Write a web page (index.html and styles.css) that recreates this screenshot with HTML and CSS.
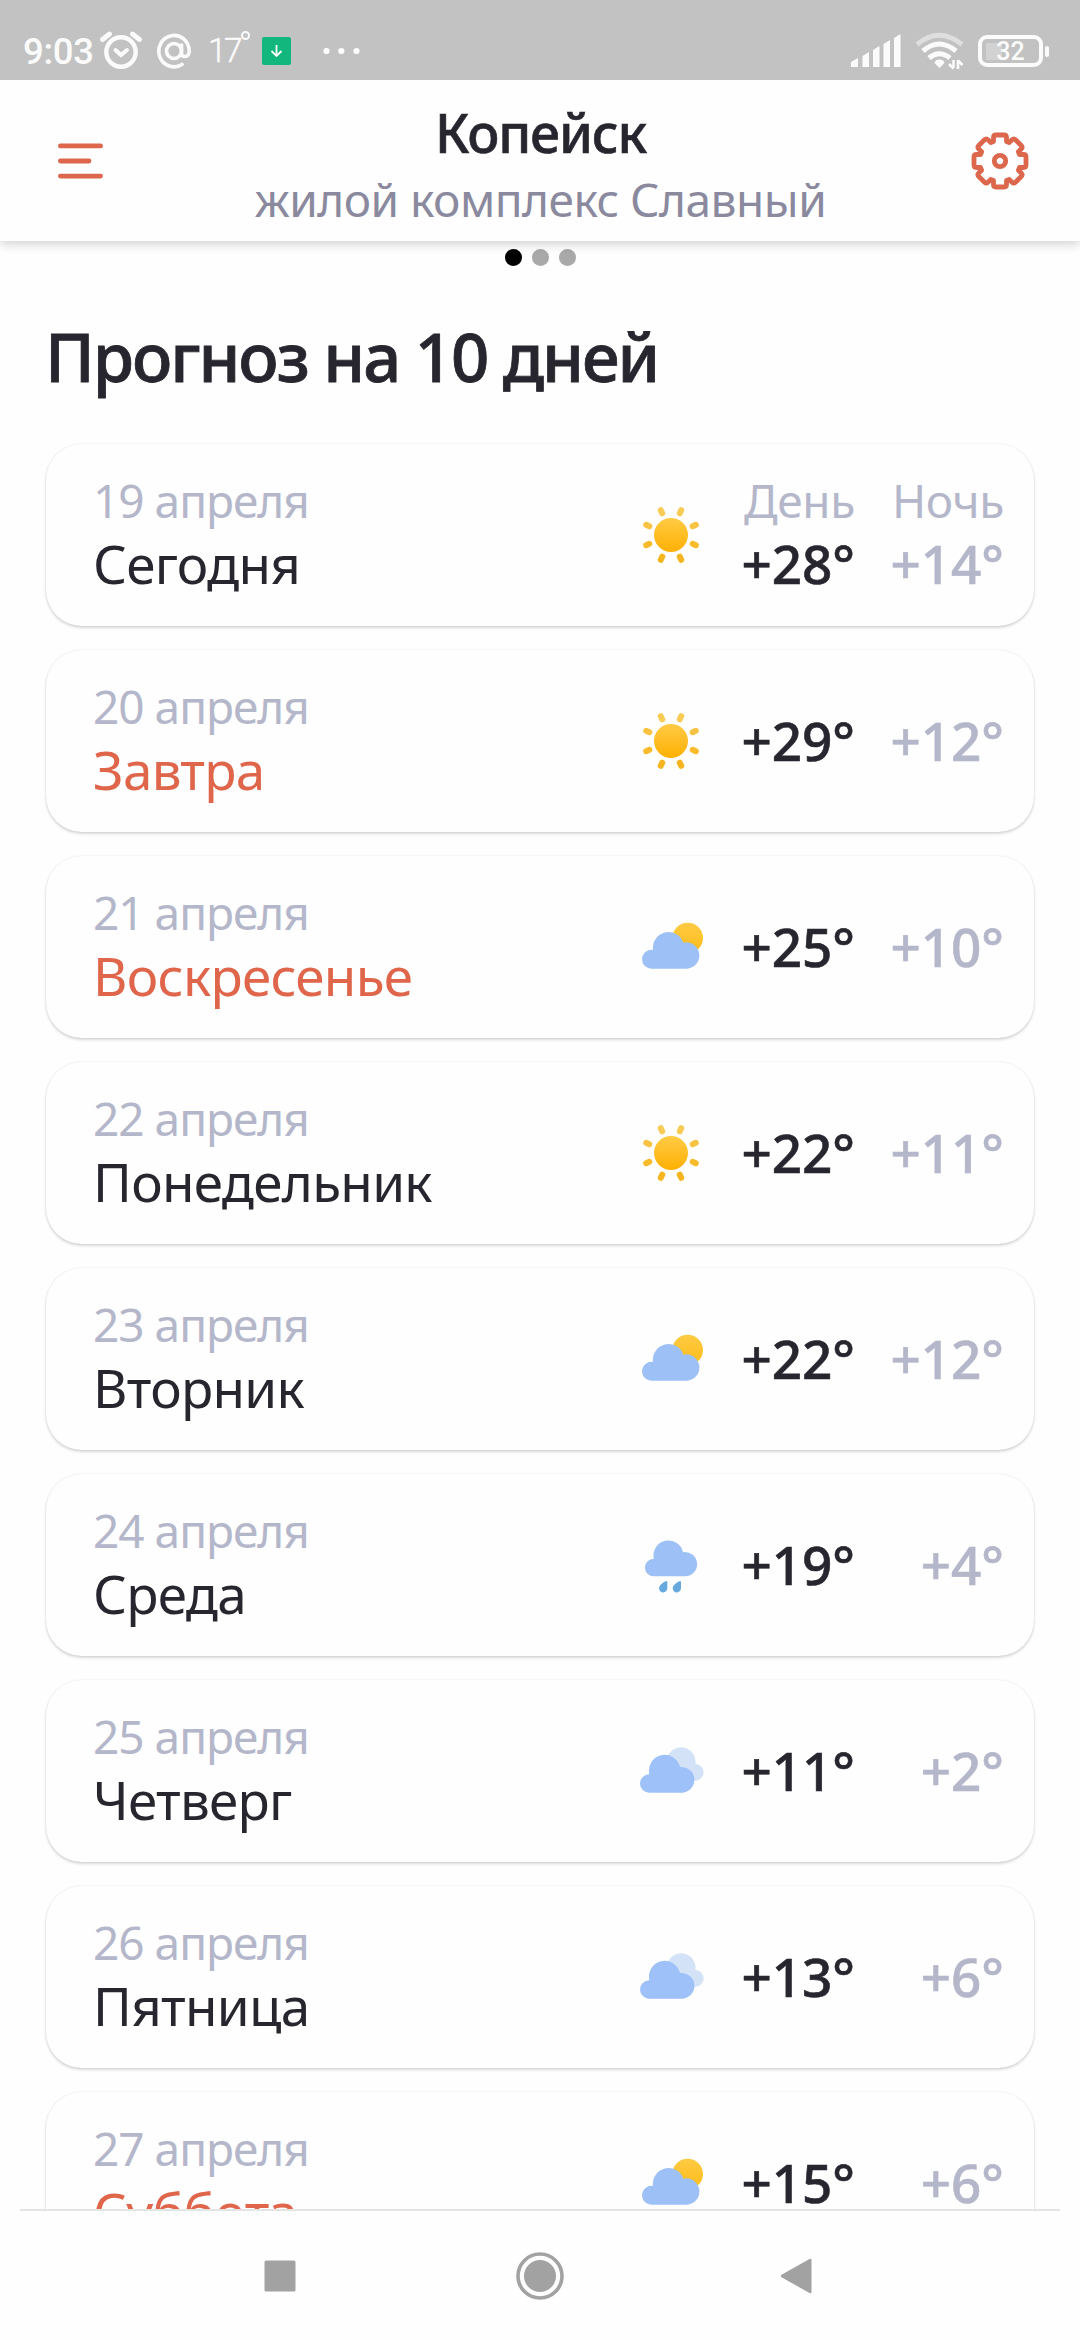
FILE: index.html
```html
<!DOCTYPE html>
<html lang="ru">
<head>
<meta charset="utf-8">
<title>Прогноз на 10 дней</title>
<link rel="stylesheet" href="styles.css">
</head>
<body>
<svg class="defs" width="0" height="0">
  <defs>
    <linearGradient id="gs" gradientUnits="userSpaceOnUse" x1="0" y1="-17" x2="0" y2="17"><stop offset="0" stop-color="#ffcb45"/><stop offset="1" stop-color="#feb003"/></linearGradient>
    <linearGradient id="gs2" x1="0" y1="0" x2="0" y2="1"><stop offset="0" stop-color="#fecb44"/><stop offset="1" stop-color="#febb19"/></linearGradient>
  </defs>
  <symbol id="sun" viewBox="-35 -35 70 70">
    <circle r="17" fill="url(#gs)"/>
    <g stroke-width="6" stroke-linecap="round">
      <path stroke="#f8cb55" d="M8.800-21.700L10.200-24.800M-8.800-21.700L-10.200-24.800"/>
      <path stroke="#f8c343" d="M21.700-8.800L24.800-10.200M-21.700-8.800L-24.800-10.200"/>
      <path stroke="#f8bb2a" d="M21.700 8.800L24.800 10.200M-21.700 8.800L-24.800 10.200"/>
      <path stroke="#f6b51e" d="M8.800 21.700L10.200 24.800M-8.800 21.700L-10.200 24.800"/>
    </g>
  </symbol>
  <symbol id="partly" viewBox="45 156 210 210">
    <circle cx="200" cy="234" r="46" fill="url(#gs2)"/>
    <path fill="#9dc1f6" d="M95 326A28.500 28.500 0 1 1 96 269.500A47 47 0 0 1 187 248A39.500 39.500 0 1 1 197 326Z"/>
  </symbol>
  <symbol id="rain" viewBox="45 150 210 210">
    <path fill="#9dc1f6" d="M98 289A26.500 26.500 0 1 1 98.500 236A44 44 0 0 1 186 216.500A36.500 36.500 0 1 1 193 289Z"/>
    <path fill="#67a9de" d="M136 303Q139 303 139 307V324A12.500 12.500 0 1 1 115 320Q119 311 136 303ZM177 303Q180 303 180 307V324A12.500 12.500 0 1 1 156 320Q160 311 177 303Z"/>
  </symbol>
  <symbol id="cloudy" viewBox="45 768 210 210">
    <path fill="#d3e2f6" d="M138 839A43 43 0 1 1 223 852A25 25 0 1 1 223 902L170 900Z"/>
    <path fill="#9dc1f8" d="M84 938A27.500 27.500 0 1 1 85 883A47 47 0 0 1 177 861A38.500 38.500 0 1 1 186 938Z"/>
  </symbol>
</svg>

<header class="status">
  <span class="time">9:03</span>
  <svg class="alarm" width="42" height="40" viewBox="0 0 42 40" fill="none" stroke="#fbfbfb" stroke-width="4.400" stroke-linecap="round"><circle cx="21" cy="21" r="14.700"/><path d="M2.500 8.500L9.500 3M39.500 8.500L32.500 3" stroke-width="4.800"/><path d="M15.500 19L21 24L27 19" stroke-width="4"/></svg>
  <svg class="at" width="36" height="36" viewBox="0 0 36 36" fill="none" stroke="#fbfbfb" stroke-width="3.600" stroke-linecap="round"><circle cx="18" cy="18" r="7.500"/><path d="M25.500 12V20.500Q25.500 23.500 29 23.500Q33 23.500 33.200 18A15.200 15.700 0 1 0 26 31.500"/></svg>
  <span class="outside">17<i></i></span>
  <svg class="dl" width="29" height="28" viewBox="0 0 29 28"><rect width="29" height="28" rx="2" fill="#11b77c"/><path d="M14.500 8V19M9.500 14L14.500 19L19.500 14" fill="none" stroke="#fff" stroke-width="1.800"/></svg>
  <svg class="more" width="37" height="8" viewBox="0 0 37 8" fill="#fff"><circle cx="3.500" cy="4" r="3.100"/><circle cx="18.300" cy="4" r="3.100"/><circle cx="33.500" cy="4" r="3.100"/></svg>
  <span class="grow"></span>
  <svg class="signal" width="50" height="34" viewBox="0 0 50 34" fill="#fbfbfb"><path d="M0 28L7 24V33H0ZM11.500 22L18 18V33H11.500ZM22 16L28.500 12V33H22ZM32.500 10L39 6V33H32.500ZM43 4L49.500 0V33H43Z"/></svg>
  <svg class="wifi" width="50" height="38" viewBox="0 0 50 38" fill="none" stroke="#fbfbfb" stroke-width="5"><path stroke="#dedede" d="M2 12.500Q24 -6 47 12.500"/><path d="M8 19Q24 5 41 19M14 26Q24 17.500 35 26"/><path d="M24.500 27.500Q29 27.500 29.500 31L24.500 36L19.500 31Q20 27.500 24.500 27.500Z" fill="#fbfbfb" stroke="none"/><path d="M38.500 28V36M34 32L38.500 36.500M43 37V28M43 28.500L47.500 33" stroke-width="2.600"/></svg>
  <span class="battery">32</span>
</header>

<div class="appbar">
  <svg width="45" height="36" viewBox="0 0 45 36" stroke="#dd674c" stroke-width="4.800" stroke-linecap="round"><path d="M2.400 2.900H42.600M2.400 18H31M2.400 33.100H42.600"/></svg>
  <div class="place"><h1>Копейск</h1><p>жилой комплекс Славный</p></div>
  <svg width="58" height="58" viewBox="-29 -29 58 58" fill="none" stroke="#dd674c" stroke-width="4.800" stroke-linejoin="round"><circle r="5.700"/><path d="M-6.500-19.500V-23.500Q-6.500-26-4-26H4Q6.500-26 6.500-23.500V-19.500L9.200-18.400L12-21.200Q13.700-22.900 15.500-21.200L21.200-15.500Q22.900-13.700 21.200-12L18.400-9.200L19.500-6.500H23.500Q26-6.500 26-4V4Q26 6.500 23.500 6.500H19.500L18.400 9.200L21.200 12Q22.900 13.700 21.200 15.500L15.500 21.200Q13.700 22.900 12 21.200L9.200 18.400L6.500 19.500V23.500Q6.500 26 4 26H-4Q-6.500 26-6.500 23.500V19.500L-9.200 18.400L-12 21.200Q-13.700 22.900-15.500 21.200L-21.200 15.500Q-22.900 13.700-21.200 12L-18.400 9.200L-19.500 6.500H-23.500Q-26 6.500-26 4V-4Q-26-6.500-23.500-6.500H-19.500L-18.400-9.200L-21.200-12Q-22.900-13.700-21.200-15.500L-15.500-21.200Q-13.700-22.900-12-21.200L-9.200-18.400Z"/></svg>
</div>

<main class="content">
  <div class="dots"><i class="on"></i><i></i><i></i></div>
  <h2>Прогноз на 10 дней</h2>
  <div class="list">
    <section class="card"><div class="when"><p>19 апреля</p><b>Сегодня</b></div><svg class="ico"><use href="#sun"/></svg><div class="t day head"><p>День</p>+28°</div><div class="t night head"><p>Ночь</p>+14°</div></section>
    <section class="card"><div class="when"><p>20 апреля</p><b class="red">Завтра</b></div><svg class="ico"><use href="#sun"/></svg><div class="t day">+29°</div><div class="t night">+12°</div></section>
    <section class="card"><div class="when"><p>21 апреля</p><b class="red">Воскресенье</b></div><svg class="ico"><use href="#partly"/></svg><div class="t day">+25°</div><div class="t night">+10°</div></section>
    <section class="card"><div class="when"><p>22 апреля</p><b>Понедельник</b></div><svg class="ico"><use href="#sun"/></svg><div class="t day">+22°</div><div class="t night">+11°</div></section>
    <section class="card"><div class="when"><p>23 апреля</p><b>Вторник</b></div><svg class="ico"><use href="#partly"/></svg><div class="t day">+22°</div><div class="t night">+12°</div></section>
    <section class="card"><div class="when"><p>24 апреля</p><b>Среда</b></div><svg class="ico"><use href="#rain"/></svg><div class="t day">+19°</div><div class="t night">+4°</div></section>
    <section class="card"><div class="when"><p>25 апреля</p><b>Четверг</b></div><svg class="ico"><use href="#cloudy"/></svg><div class="t day">+11°</div><div class="t night">+2°</div></section>
    <section class="card"><div class="when"><p>26 апреля</p><b>Пятница</b></div><svg class="ico"><use href="#cloudy"/></svg><div class="t day">+13°</div><div class="t night">+6°</div></section>
    <section class="card"><div class="when"><p>27 апреля</p><b class="red">Суббота</b></div><svg class="ico"><use href="#partly"/></svg><div class="t day">+15°</div><div class="t night">+6°</div></section>
  </div>
</main>

<nav class="sysnav">
  <svg width="50" height="50" viewBox="-25 -25 50 50" fill="#a2a2a2"><rect x="-15.500" y="-15.500" width="31" height="31" rx="1.500"/></svg>
  <svg width="50" height="50" viewBox="-25 -25 50 50" fill="#a2a2a2"><circle r="22" fill="none" stroke="#a2a2a2" stroke-width="3.600"/><circle r="16"/></svg>
  <svg width="50" height="50" viewBox="-21 -25 50 50" fill="#a2a2a2"><path d="M-14.500-1.200L13.500-17Q15.500-18 15.500-16V16Q15.500 18 13.500 17L-14.500 1.200Q-16 0-14.500-1.200Z"/></svg>
</nav>
</body>
</html>
```

FILE: styles.css
```css
* { box-sizing: border-box; margin: 0; padding: 0; }
body {
  width: 1080px; height: 2340px; overflow: hidden;
  display: flex; flex-direction: column;
  background: #fefefe; color: #27262f;
  font-family: "Noto Sans", "Open Sans", sans-serif;
}
svg { display: block; flex: none; }
.defs { width: 0; height: 0; }

.status {
  height: 80px; flex: none; padding: 21px 31px 0 23px;
  display: flex; align-items: center; position: relative; z-index: 2;
  background: #c2c2c2; color: #fbfbfb;
  font-family: Roboto, sans-serif;
}
.time { width: 77px; font-size: 36.500px; font-weight: 500; line-height: 40px; padding-top: 2px; letter-spacing: -.3px; }
.alarm { margin-right: 14px; }
.at { margin-right: 16px; }
.outside { width: 54px; font-size: 33.500px; font-weight: 300; line-height: 40px; display: flex; align-items: flex-start; letter-spacing: -2.500px; -webkit-text-stroke: .4px #fbfbfb; }
.outside i { width: 9px; height: 9px; border: 2px solid #fbfbfb; border-radius: 50%; margin: 0 0 0 1px; }
.dl { margin-right: 32px; }
.grow { flex: 1; }
.signal { margin-right: 14px; }
.wifi { margin-right: 13px; }
.battery {
  width: 65px; height: 32px; border: 4px solid #fbfbfb; border-radius: 9px;
  font-size: 25px; font-weight: 500; line-height: 26px; text-align: center;
  margin-right: 6px; position: relative;
  background: linear-gradient(#d2d2d2, #d2d2d2) 4px 4px / 16px 17px no-repeat;
}
.battery::after { content: ""; position: absolute; left: 63px; top: 7px; width: 4px; height: 11px; border-radius: 2px; background: #fbfbfb; }

.appbar {
  height: 161px; flex: none; padding: 0 51px 0 58px; position: relative; z-index: 1;
  display: flex; align-items: center; justify-content: space-between;
  background: #fefefe; box-shadow: 0 3px 10px rgba(0,0,0,.18);
}
.place { text-align: center; padding-top: 11px; margin-left: 7px; }
.place h1 { font-size: 53.500px; font-weight: 500; line-height: 66px; letter-spacing: -1.200px; -webkit-text-stroke: .6px; }
.place p { font-size: 46px; line-height: 66px; color: #8a899e; letter-spacing: -.5px; }

.content { height: 1968px; flex: none; overflow: hidden; padding-top: 8px; }
.dots { display: flex; justify-content: center; gap: 10px; height: 17px; }
.dots i { width: 17px; height: 17px; border-radius: 50%; background: #a9a9a9; }
.dots .on { background: #000; }
h2 { margin: 44px 0 0 45px; height: 134px; font-size: 67px; font-weight: 500; line-height: 92px; letter-spacing: -2px; white-space: nowrap; -webkit-text-stroke: .8px; }

.list { display: flex; flex-direction: column; gap: 24px; padding: 0 46px; }
.card {
  height: 182px; border-radius: 36px; background: #fefefe;
  padding: 0 30px 0 47px; display: flex; align-items: center;
  box-shadow: 0 2px 3px rgba(0,0,0,.15), 0 0 2px rgba(0,0,0,.1);
}
.when { flex: 1; white-space: nowrap; padding-bottom: 6px; }
.when p, .t p { font-size: 46px; font-weight: 400; line-height: 64px; color: #b4b6ca; letter-spacing: -1px; }
.when b { display: block; font-size: 53px; font-weight: 400; line-height: 64px; letter-spacing: -.7px; }
.when .red { color: #df664b; }
.ico { width: 70px; height: 70px; margin-right: 28px; }
.t { width: 121px; text-align: right; white-space: nowrap; font-size: 53px; font-weight: 500; line-height: 64px; -webkit-text-stroke: .6px; }
.t p { -webkit-text-stroke: 0; letter-spacing: -.3px; }
.head { padding-bottom: 6px; }
.night { width: 149px; color: #b4b6ca; }

.sysnav {
  flex: 1; margin: 0 20px; padding: 0 235px; border-top: 2px solid #e4e4e4;
  display: flex; align-items: center; justify-content: space-between;
}
```
